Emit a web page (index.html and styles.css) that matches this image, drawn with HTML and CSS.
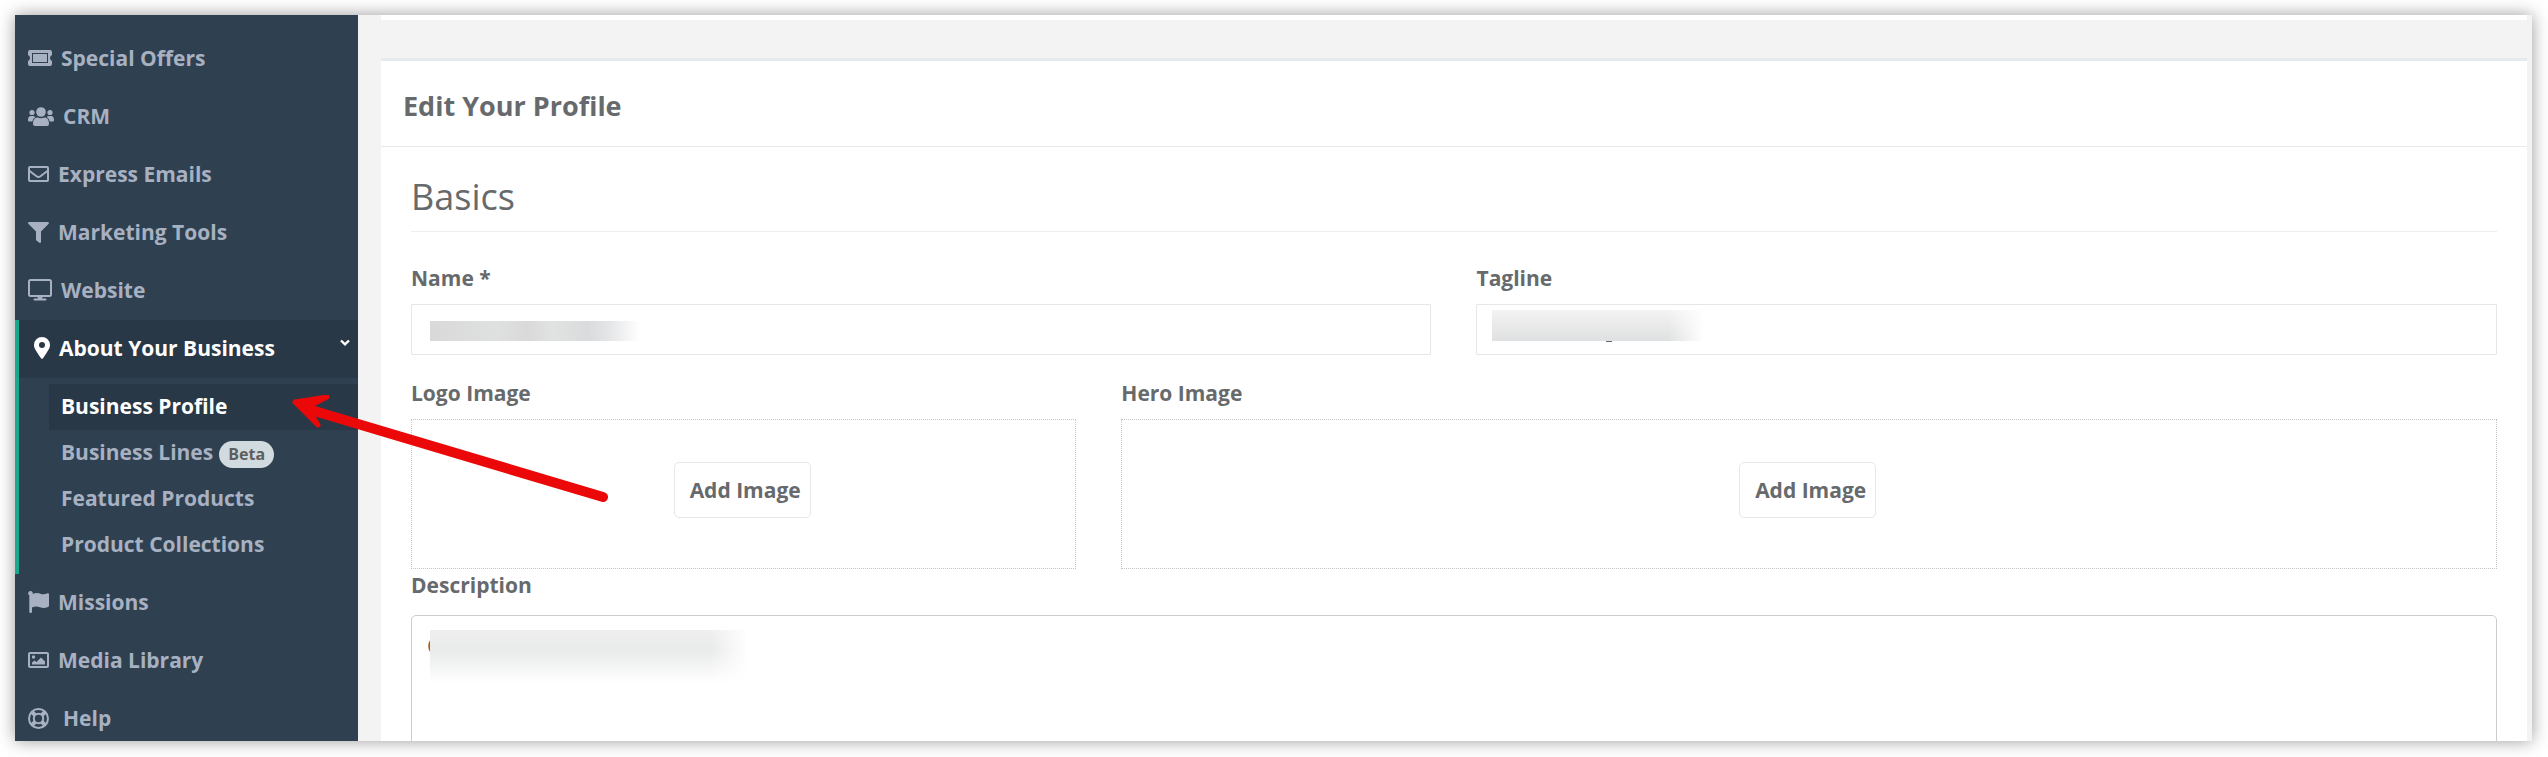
FILE: index.html
```html
<!DOCTYPE html>
<html lang="en">
<head>
    <meta charset="UTF-8">
    <meta name="viewport" content="width=device-width, initial-scale=1.0">
    <title>Edit Your Profile</title>
    <link rel="stylesheet" href="styles.css">
</head>
<body>

    <div class="window">

        <!-- Sidebar -->
        <nav class="sidebar">
            <ul class="menu">
                <li>
                    <a href="#">
                        <svg class="icon" width="24" height="16" viewBox="0 0 24 16"><path fill="currentColor" fill-rule="evenodd" d="M2 0H22Q24 0 24 2V5Q22 6 22 8Q22 10 24 11V14Q24 16 22 16H2Q0 16 0 14V11Q2 10 2 8Q2 6 0 5V2Q0 0 2 0ZM4 3V13H20V3ZM5 4H19V12H5Z"/></svg>
                        <span>Special Offers</span>
                    </a>
                </li>
                <li>
                    <a href="#">
                        <svg class="icon" width="26" height="19" viewBox="0 0 26 19"><g fill="currentColor"><circle cx="13" cy="5" r="4.8"/><circle cx="4" cy="5.5" r="2.6"/><circle cx="22" cy="5.5" r="2.6"/><path d="M5 17C5 12.500 7 10.500 9.500 10.500Q13 12 16.500 10.500C19 10.500 21 12.500 21 17Q21 19 19 19H7Q5 19 5 17ZM0 13Q0 9 3 9H5Q6.500 9 7.300 10Q4.600 11.500 4.300 14.500H1Q0 14.500 0 13ZM26 13Q26 9 23 9H21Q19.500 9 18.700 10Q21.400 11.500 21.700 14.500H25Q26 14.500 26 13Z"/></g></svg>
                        <span>CRM</span>
                    </a>
                </li>
                <li>
                    <a href="#">
                        <svg class="icon" width="21" height="16" viewBox="0 0 21 16"><g fill="none" stroke="currentColor" stroke-width="2"><rect x="1" y="1" width="19" height="14" rx="1"/><path d="M1 4.500L8.500 10.300Q10.500 11.700 12.500 10.300L20 4.500"/></g></svg>
                        <span>Express Emails</span>
                    </a>
                </li>
                <li>
                    <a href="#">
                        <svg class="icon" width="21" height="21" viewBox="0 0 21 21"><path fill="currentColor" d="M1 0H20Q21.500 .6 20.700 1.700L13 9.500V20Q12.600 21.300 11.400 20.700L8.400 18.500Q8 18 8 17.500V9.500L.3 1.700Q-.5 .6 1 0Z"/></svg>
                        <span>Marketing Tools</span>
                    </a>
                </li>
                <li>
                    <a href="#">
                        <svg class="icon" width="24" height="22" viewBox="0 0 24 22"><rect x="1" y="1" width="22" height="16" rx="1.5" fill="none" stroke="currentColor" stroke-width="2"/><path fill="currentColor" d="M10 17H14L14.500 19.500H18Q19 20.500 18 21.500H6Q5 20.500 6 19.500H9.500Z"/></svg>
                        <span>Website</span>
                    </a>
                </li>
                <li class="active">
                    <a href="#">
                        <svg class="icon" width="16" height="22" viewBox="0 0 16 22"><path fill="currentColor" fill-rule="evenodd" d="M8 0A8 8 0 0 1 16 8C16 11.500 14 13.500 9 21.300Q8 22.300 7 21.300C2 13.500 0 11.500 0 8A8 8 0 0 1 8 0ZM8 5A3 3 0 1 0 8 11A3 3 0 1 0 8 5Z"/></svg>
                        <span>About Your Business</span>
                        <svg class="chevron" width="10" height="7" viewBox="0 0 10 7"><path d="M1 1.500L5 5.300L9 1.500" fill="none" stroke="currentColor" stroke-width="2.4"/></svg>
                    </a>
                    <ul class="submenu">
                        <li class="current"><a href="#">Business Profile</a></li>
                        <li><a href="#">Business Lines <span class="badge">Beta</span></a></li>
                        <li><a href="#">Featured Products</a></li>
                        <li><a href="#">Product Collections</a></li>
                    </ul>
                </li>
                <li>
                    <a href="#">
                        <svg class="icon" width="21" height="22" viewBox="0 0 21 22"><path fill="currentColor" d="M2.500 0A2.300 2.300 0 0 1 4.700 3Q9 1 13 3Q16 4 19.500 2.300Q21 2 21 3.300V14.500Q21 15.500 20 16Q16 18 12 16.300Q8 14.500 4 16.500V21Q4 22 2.500 22Q1.300 22 1.300 21V4.300A2.300 2.300 0 0 1 2.500 0Z"/></svg>
                        <span>Missions</span>
                    </a>
                </li>
                <li>
                    <a href="#">
                        <svg class="icon" width="21" height="16" viewBox="0 0 21 16"><rect x="1" y="1" width="19" height="14" rx="1" fill="none" stroke="currentColor" stroke-width="2"/><circle cx="5.5" cy="5" r="1.7" fill="currentColor"/><path fill="currentColor" d="M4 12.500V10.500L6.500 8.500L8.500 10L13 5.500L17 9.500V12.500Z"/></svg>
                        <span>Media Library</span>
                    </a>
                </li>
                <li>
                    <a href="#">
                        <svg class="icon" width="21" height="21" viewBox="0 0 21 21"><g fill="none" stroke="currentColor"><circle cx="10.5" cy="10.5" r="9.5" stroke-width="2"/><circle cx="10.5" cy="10.5" r="4.7" stroke-width="2"/><path stroke-width="4" d="M4 4L7 7M17 4L14 7M4 17L7 14M17 17L14 14"/></g></svg>
                        <span class="wide">Help</span>
                    </a>
                </li>
            </ul>
        </nav>

        <!-- Page Content -->
        <main class="content">
            <div class="topbar"></div>

            <section class="panel">
                <h1 class="panel-title">Edit Your Profile</h1>

                <form class="panel-body">
                    <h2>Basics</h2>

                    <div class="row">
                        <div class="field half">
                            <label for="name">Name *</label>
                            <input type="text" id="name" class="name-input">
                        </div>
                        <div class="field half">
                            <label for="tagline">Tagline</label>
                            <input type="text" id="tagline" class="tagline-input">
                        </div>
                        <div class="field third">
                            <label for="logoButton">Logo Image</label>
                            <div class="dropzone">
                                <button type="button" id="logoButton">Add Image</button>
                            </div>
                        </div>
                        <div class="field two-thirds">
                            <label for="heroButton">Hero Image</label>
                            <div class="dropzone">
                                <button type="button" id="heroButton">Add Image</button>
                            </div>
                        </div>
                    </div>

                    <div class="field description">
                        <label for="description">Description</label>
                        <div class="redacted">
                            <textarea id="description">C</textarea>
                        </div>
                    </div>
                </form>
            </section>
        </main>

        <!-- Pointer to the current page -->
        <svg class="arrow" width="322" height="112" viewBox="0 0 322 112">
            <path d="M314 102L22 15" fill="none" stroke="#ea0808" stroke-width="10" stroke-linecap="round"/>
            <path d="M6 7L38 2L22 10L22 18L29 30Z" fill="#ea0808" stroke="#ea0808" stroke-width="5" stroke-linejoin="round"/>
        </svg>
    </div>

</body>
</html>
```

FILE: styles.css
```css
/* General Styles */
* {
    box-sizing: border-box;
}

body {
    font-family: 'Open Sans', sans-serif;
    font-size: 21px;
    line-height: 30px;
    margin: 0;
    padding: 15px 16px 16px 15px;
    height: 100vh;
    overflow: hidden;
    background: white;
    color: #676a6c;
}

.window {
    position: relative;
    display: flex;
    height: 100%;
    background: #f3f3f3;
    box-shadow: 0 0 16px rgba(0, 0, 0, 0.4);
}

/* Sidebar */
.sidebar {
    width: 343px;
    flex-shrink: 0;
    padding-top: 15px;
    background: #2f4050;
    overflow: hidden;
}

.menu, .submenu {
    list-style: none;
    margin: 0;
    padding: 0;
}

.sidebar a {
    display: flex;
    align-items: center;
    padding-bottom: 2px;
    color: #a7b1c2;
    font-weight: 700;
    text-decoration: none;
}

.menu > li > a {
    height: 58px;
    padding-left: 13px;
    padding-right: 8px;
    gap: 9px;
}

.wide {
    padding-left: 5px;
}

.menu > .active {
    border-left: 4px solid #19aa8d;
}

.menu > .active > a {
    padding-left: 15px;
    background: #293846;
    color: white;
}

.chevron {
    margin: 0 0 12px auto;
}

/* Submenu */
.submenu {
    padding: 6px 0;
}

.submenu li {
    margin-left: 30px;
}

.submenu a {
    height: 46px;
    padding-left: 12px;
    gap: 6px;
}

.submenu .current a {
    background: #293846;
    color: white;
}

.badge {
    margin-top: 4px;
    padding: 0 9px;
    border-radius: 14px;
    background: #d1dade;
    color: #5e5e5e;
    font-size: 16px;
    line-height: 27px;
}

/* Page Content */
.content {
    flex: 1;
    padding: 0 5px 0 23px;
    overflow: hidden;
}

.topbar {
    height: 5px;
    margin-bottom: 38px;
    background: white;
}

.panel {
    background: white;
    border-top: 3px solid #e7eaec;
}

.panel-title {
    margin: 0;
    padding: 32px 22px 27px;
    border-bottom: 1px solid #e7eaec;
    font-size: 27px;
    line-height: 26px;
    font-weight: 700;
}

.panel-body {
    padding: 30px;
}

.panel-body h2 {
    margin: 0 0 31px;
    padding-bottom: 14px;
    border-bottom: 1px solid #eee;
    font-size: 36px;
    line-height: 40px;
    font-weight: 400;
}

/* Form */
.row {
    display: grid;
    grid-template-columns: repeat(12, 1fr);
    gap: 23px 45px;
}

.half {
    grid-column: span 6;
}

.third {
    grid-column: span 4;
}

.two-thirds {
    grid-column: span 8;
}

.field label {
    display: block;
    margin-bottom: 11px;
    font-weight: 700;
}

.field input {
    display: block;
    width: 100%;
    height: 51px;
    padding: 9px 18px;
    border: 1px solid #e5e6e7;
    border-radius: 1px;
    background: white no-repeat;
    font: inherit;
    color: inherit;
}

.field .name-input {
    background-image: linear-gradient(to right, #d9d9d9, #dfe0e0 32%, #d9d9d9 46%, #e1e2e2 58%, #dadbdc 75%, #e4e5e6 85%, white);
    background-size: 210px 20px;
    background-position: 18px 16px;
}

.field .tagline-input {
    background-image: linear-gradient(#676a6c, #676a6c), linear-gradient(to right, transparent 83%, white), linear-gradient(#f3f3f3, #dfe0e1);
    background-size: 6px 1px, 212px 31px, 212px 31px;
    background-position: 129px 36px, 15px 5px, 15px 5px;
}

.dropzone {
    display: flex;
    justify-content: center;
    height: 150px;
    padding: 42px 3px 0 0;
    border: 1px dotted #c4c4c4;
}

.dropzone button {
    height: 56px;
    padding: 0 9px 0 15px;
    border: 1px solid #e7e7e7;
    border-radius: 5px;
    background: white;
    color: inherit;
    font: inherit;
    font-weight: 700;
}

.description {
    margin-top: 1px;
}

.description label {
    margin-bottom: 15px;
}

.description textarea {
    display: block;
    width: 100%;
    height: 240px;
    padding: 15px;
    border: 1px solid #ccc;
    border-radius: 5px;
    background: white;
    color: inherit;
    font: inherit;
    resize: none;
}

/* Hides the entered text */
.redacted {
    position: relative;
}

.redacted::after {
    content: "";
    position: absolute;
    left: 19px;
    top: 15px;
    width: 318px;
    height: 53px;
    background: linear-gradient(to right, transparent 88%, white), linear-gradient(#efefef, #e9eaea 38%, white);
}

/* Arrow */
.arrow {
    position: absolute;
    left: 274px;
    top: 380px;
}
```
